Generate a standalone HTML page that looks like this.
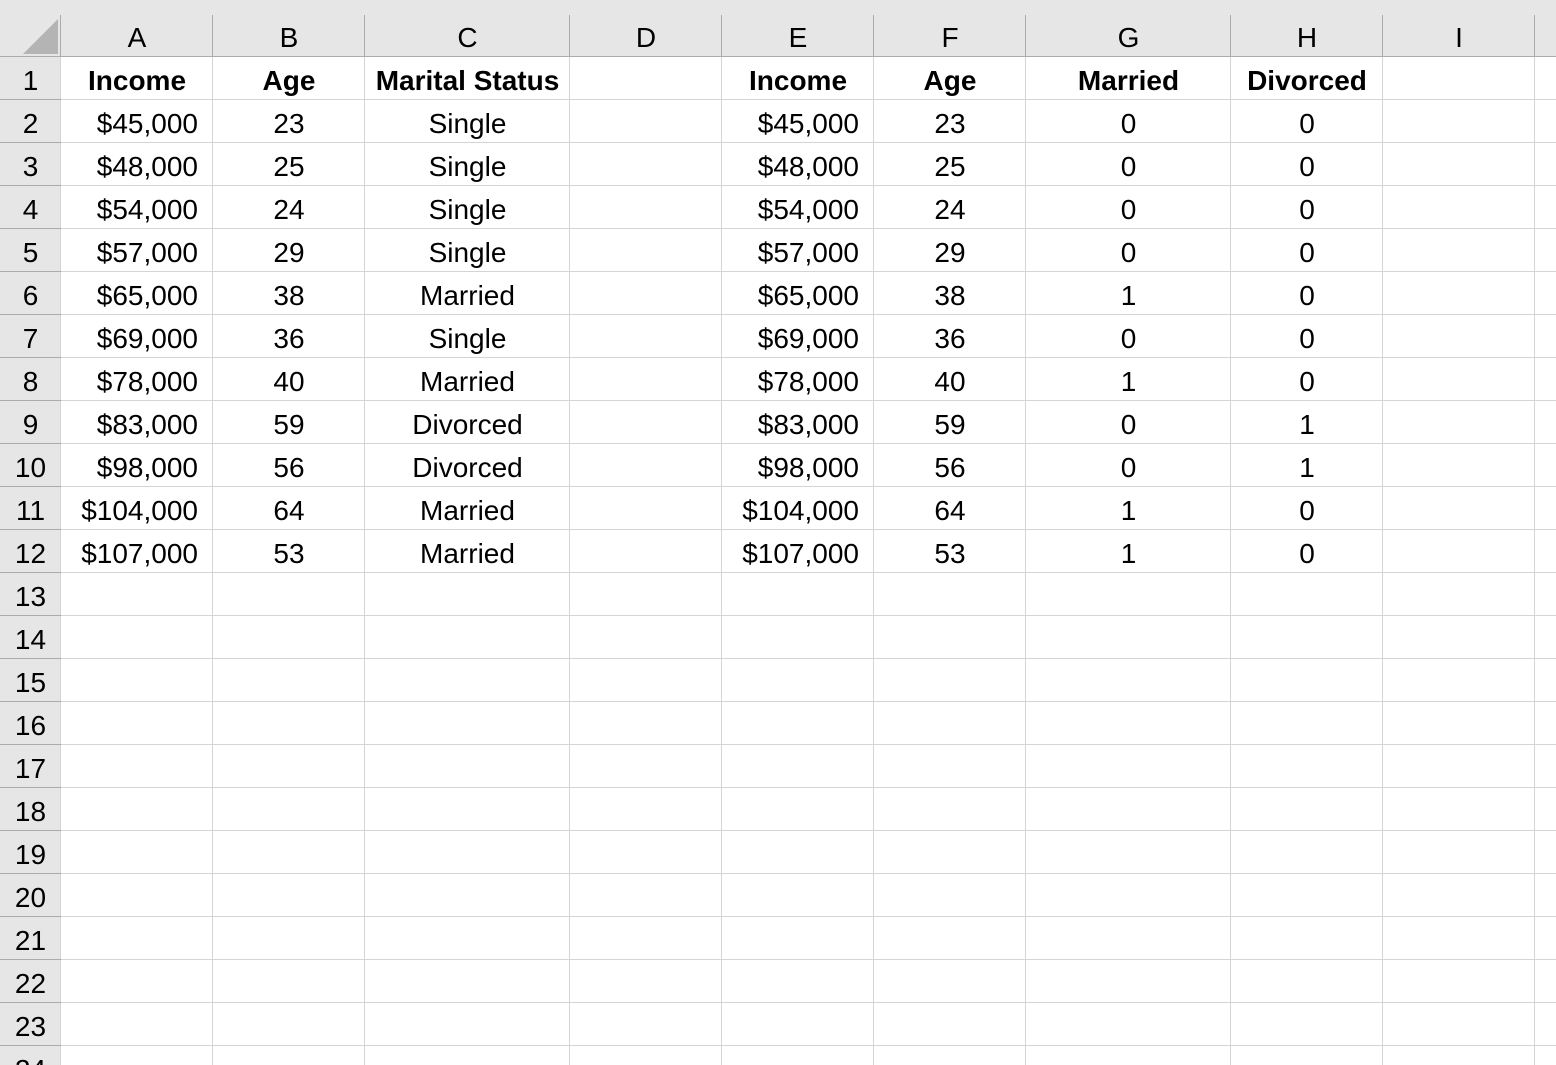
<!DOCTYPE html>
<html><head><meta charset="utf-8"><style>
html,body{margin:0;width:1556px;height:1065px;overflow:hidden}
body{background:#fff;font-family:"Liberation Sans",Arial,sans-serif;position:relative}
.hdr{position:absolute;left:0;top:0;width:1556px;height:57px;background:#e6e6e6;border-bottom:1px solid #ababab;box-sizing:border-box}
.rh{position:absolute;left:0;top:57px;width:61px;height:1008px;background:#e6e6e6;border-right:1px solid #ababab;box-sizing:border-box}
.vl{position:absolute;top:57px;width:1px;height:1008px;background:#d4d4d4}
.hvl{position:absolute;top:15px;width:1px;height:42px;background:#ababab}
.hl{position:absolute;left:61px;width:1495px;height:1px;background:#d4d4d4}
.rhl{position:absolute;left:0;width:61px;height:1px;background:#ababab}
.t{position:absolute;font-size:28px;line-height:47px;height:43px;overflow:hidden;text-align:center;color:#000;white-space:nowrap}
.b{font-weight:bold}
.r{text-align:right}
.tri{position:absolute;left:23px;top:19px;width:0;height:0;border-left:35px solid transparent;border-bottom:35px solid #b4b4b4}
</style></head><body>
<div class="hdr"></div><div class="rh"></div>
<div class="tri"></div>
<div id="g"></div>
<script>
var xs=[61,213,365,570,722,874,1026,1231,1383,1535];
var h='';
xs.forEach(function(x){h+='<div class="vl" style="left:'+(x-1)+'px"></div><div class="hvl" style="left:'+(x-1)+'px"></div>';});
for(var r=1;r<=23;r++){var y=57+43*r-1;h+='<div class="hl" style="top:'+y+'px"></div><div class="rhl" style="top:'+y+'px"></div>';}
var L='ABCDEFGHI';
for(var i=0;i<9;i++){h+='<div class="t" style="top:14px;left:'+xs[i]+'px;width:'+(xs[i+1]-xs[i])+'px">'+L[i]+'</div>';}
for(var r=1;r<=24;r++){h+='<div class="t" style="left:0;width:61px;top:'+(57+43*(r-1))+'px">'+r+'</div>';}
var data=[["Income","Age","Marital Status","","Income","Age","Married","Divorced"],
["$45,000","23","Single","","$45,000","23","0","0"],
["$48,000","25","Single","","$48,000","25","0","0"],
["$54,000","24","Single","","$54,000","24","0","0"],
["$57,000","29","Single","","$57,000","29","0","0"],
["$65,000","38","Married","","$65,000","38","1","0"],
["$69,000","36","Single","","$69,000","36","0","0"],
["$78,000","40","Married","","$78,000","40","1","0"],
["$83,000","59","Divorced","","$83,000","59","0","1"],
["$98,000","56","Divorced","","$98,000","56","0","1"],
["$104,000","64","Married","","$104,000","64","1","0"],
["$107,000","53","Married","","$107,000","53","1","0"]];
data.forEach(function(row,ri){var y=57+43*ri;row.forEach(function(v,ci){if(!v)return;var cls='t'+(ri==0?' b':'');var st='top:'+y+'px;left:'+xs[ci]+'px;width:'+(xs[ci+1]-xs[ci])+'px';
if(ri>0&&(ci==0||ci==4)){cls+=' r';st='top:'+y+'px;left:'+xs[ci]+'px;width:'+(xs[ci+1]-xs[ci]-15)+'px';}
h+='<div class="'+cls+'" style="'+st+'">'+v+'</div>';});});
document.getElementById('g').innerHTML=h;
</script>
</body></html>
